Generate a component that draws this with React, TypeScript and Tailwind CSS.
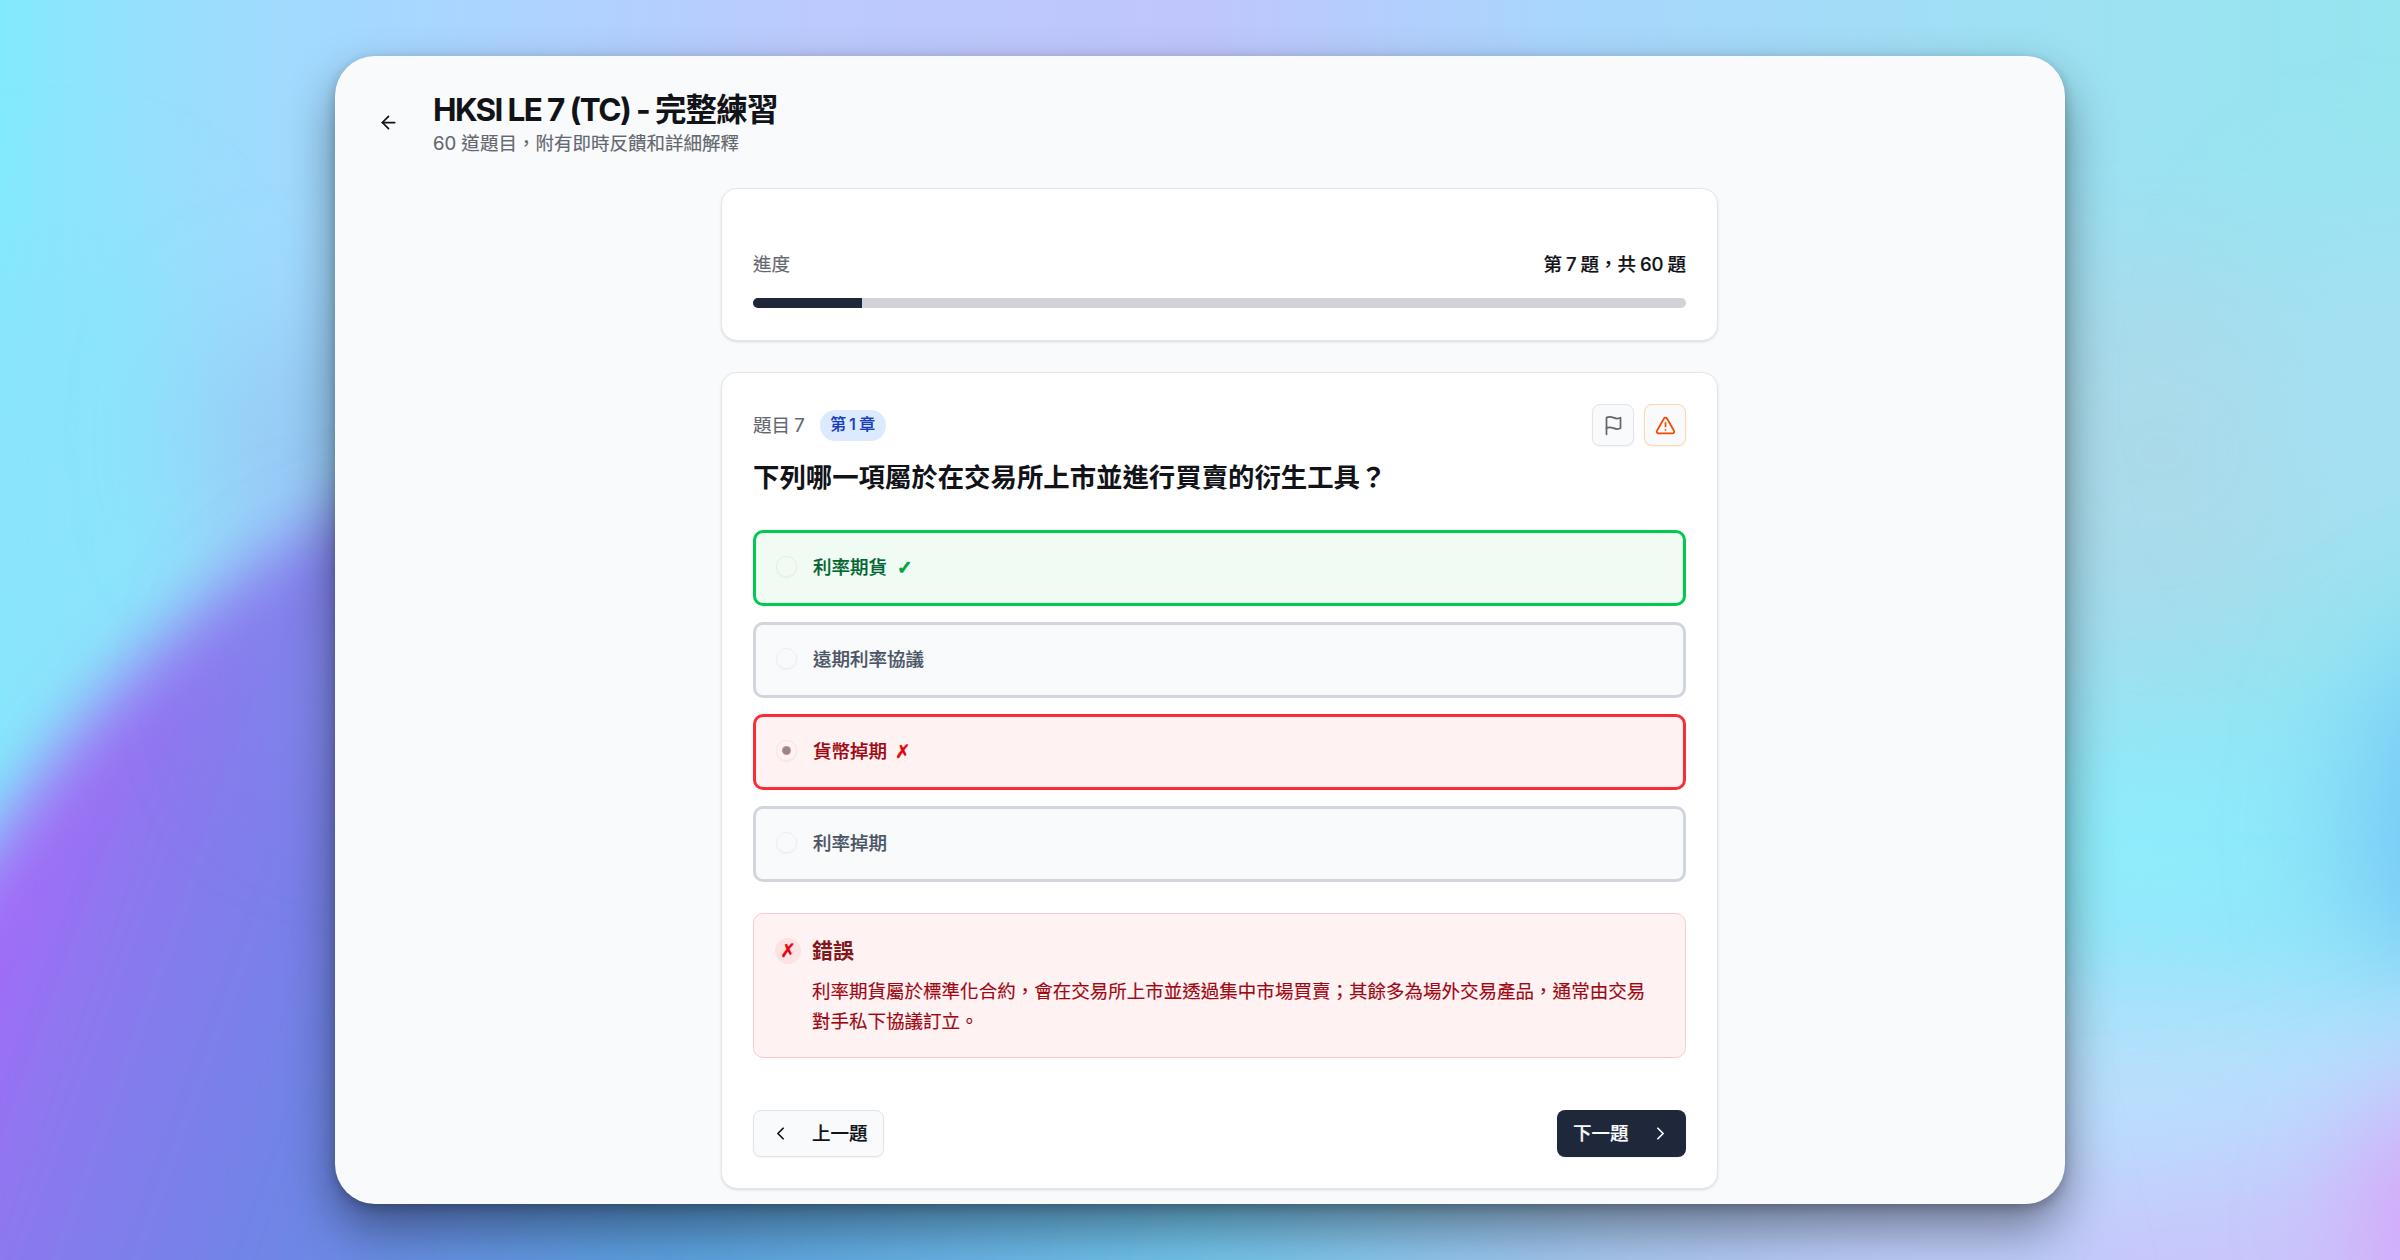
import React, { useState } from 'react';
import { AlertTriangle, ArrowLeft, ChevronLeft, ChevronRight } from 'lucide-react';
import { clsx } from 'clsx';

type OptionState = 'correct' | 'wrong' | 'neutral';

interface Option {
  id: string;
  label: string;
  state: OptionState;
}

const TOTAL = 60;
const CURRENT = 7;

const options: Option[] = [
  { id: 'a', label: '利率期貨', state: 'correct' },
  { id: 'b', label: '遠期利率協議', state: 'neutral' },
  { id: 'c', label: '貨幣掉期', state: 'wrong' },
  { id: 'd', label: '利率掉期', state: 'neutral' },
];

function Backdrop() {
  return (
    <svg className="absolute inset-0 h-full w-full" viewBox="0 0 2400 1260" preserveAspectRatio="none">
      <defs>
        <linearGradient id="sky" x1="0" x2="1" y1="0" y2="0">
          <stop offset="0" stopColor="#82eafd" />
          <stop offset="0.04" stopColor="#90e3fd" />
          <stop offset="0.09" stopColor="#9cdcfd" />
          <stop offset="0.16" stopColor="#a6d8ff" />
          <stop offset="0.34" stopColor="#bccafd" />
          <stop offset="0.5" stopColor="#bfc6fc" />
          <stop offset="0.65" stopColor="#a9d6fd" />
          <stop offset="0.83" stopColor="#9fe0f4" />
          <stop offset="1" stopColor="#96e5ef" />
        </linearGradient>
        <linearGradient id="violet" gradientUnits="userSpaceOnUse" x1="0" x2="2162" y1="0" y2="782">
          <stop offset="0.12" stopColor="#a868f9" />
          <stop offset="0.19" stopColor="#8a79ef" />
          <stop offset="0.29" stopColor="#7084e6" />
          <stop offset="0.45" stopColor="#5a9fde" />
          <stop offset="0.68" stopColor="#72c4ea" />
          <stop offset="0.85" stopColor="#a9c6ee" />
          <stop offset="0.96" stopColor="#bccbf8" />
        </linearGradient>
        <filter id="soft" x="-50%" y="-50%" width="200%" height="200%">
          <feGaussianBlur stdDeviation="32" />
        </filter>
        <filter id="softer" x="-150%" y="-150%" width="400%" height="400%">
          <feGaussianBlur stdDeviation="65" />
        </filter>
      </defs>
      <rect width="2400" height="1260" fill="url(#sky)" />
      <ellipse cx="60" cy="500" rx="130" ry="270" fill="#8ae4fb" filter="url(#softer)" />
      <ellipse cx="320" cy="440" rx="110" ry="110" fill="#94c8f4" filter="url(#softer)" />
      <ellipse cx="2160" cy="450" rx="200" ry="190" fill="#acdaea" opacity="0.9" filter="url(#softer)" />
      <ellipse cx="2400" cy="390" rx="130" ry="190" fill="#a5e0f3" filter="url(#softer)" />
      <path d="M1900 760 Q2250 780 2540 620 L2540 1100 L1900 1100 Z" fill="#8ce6f8" filter="url(#softer)" />
      <ellipse cx="2140" cy="850" rx="130" ry="60" fill="#90f0fc" filter="url(#softer)" />
      <ellipse cx="2480" cy="830" rx="110" ry="190" fill="#74c2f6" filter="url(#softer)" />
      <path d="M1900 980 L2240 990 L2560 1010 L2560 1400 L1900 1400 Z" fill="#b8e0fd" filter="url(#softer)" />
      <path d="M1900 1210 L2250 1170 L2560 1060 L2560 1500 L1900 1500 Z" fill="#c9c4fb" filter="url(#softer)" />
      <ellipse cx="2450" cy="1225" rx="70" ry="120" fill="#dc98f9" filter="url(#softer)" />
      <path
        d="M-200 1160 Q-80 930 30 790 Q160 610 400 480 L2000 900 L2110 1400 L-200 1500 Z"
        fill="url(#violet)"
        filter="url(#soft)"
      />
      <ellipse cx="360" cy="680" rx="110" ry="120" fill="#7f8ae8" opacity="0.7" filter="url(#softer)" />
    </svg>
  );
}

function FlagIcon({ className }: { className?: string }) {
  return (
    <svg
      className={className}
      viewBox="0 0 24 24"
      fill="none"
      stroke="currentColor"
      strokeWidth="2"
      strokeLinecap="round"
      strokeLinejoin="round"
    >
      <path d="M4 15s1-1 4-1 5 2 8 2 4-1 4-1V3s-1 1-4 1-5-2-8-2-4 1-4 1z" />
      <path d="M4 22v-7" />
    </svg>
  );
}

function OptionRow({ option, selected, onSelect }: { option: Option; selected: boolean; onSelect: () => void }) {
  return (
    <button
      type="button"
      onClick={onSelect}
      className={clsx(
        'flex h-[76px] w-full items-center rounded-[10px] border-3 pl-5 text-left text-[18.53px] font-medium [-webkit-text-stroke:0.2px]',
        option.state === 'correct' && 'border-[#00c950] bg-[#f0fbf4] text-[#016630]',
        option.state === 'wrong' && 'border-[#fb2c36] bg-[#fef2f2] text-[#9f0712]',
        option.state === 'neutral' && 'border-[#d1d5dc] bg-[#f9fafc] text-[#4a5565]'
      )}
    >
      <span className="mb-[3px] flex size-[21px] items-center justify-center rounded-full border border-black/5 shadow-xs">
        {selected && <span className="size-[7px] rounded-full bg-[#918792] ring-1 ring-[#d58a8f]" />}
      </span>
      <span className="ml-4">{option.label}</span>
      {option.state === 'correct' && (
        <span className="ml-[10px] font-['DejaVu_Sans',sans-serif] font-bold text-[#00a63e] [-webkit-text-stroke:1.2px]">
          ✓
        </span>
      )}
      {option.state === 'wrong' && (
        <span className="ml-[8px] font-['DejaVu_Sans',sans-serif] font-bold text-[#e7000b] [-webkit-text-stroke:0.4px]">
          ✗
        </span>
      )}
    </button>
  );
}

export default function App() {
  const [selected, setSelected] = useState('c');

  return (
    <div className="relative h-[1260px] w-[2400px] overflow-hidden pt-14 font-['Inter','Noto_Sans_CJK_TC',sans-serif] text-[#111318]">
      <Backdrop />
      <div className="relative mx-auto h-[1148px] w-[1730px] overflow-hidden rounded-[40px] bg-[#f8fafc] shadow-[0_24px_50px_rgba(0,0,0,0.42),0_4px_12px_rgba(0,0,0,0.22)]">
        <header className="flex h-[132px] items-center pl-[43px]">
          <ArrowLeft className="size-[21px]" />
          <div className="ml-[34px] pt-px">
            <h1 className="text-[31.5px] leading-[42px] font-bold tracking-[-0.025em]">
              <span className="tracking-[-0.052em]">HKSI LE 7 (TC) - </span>完整練習
            </h1>
            <p className="text-[18.53px] leading-[25px] text-[#65676e] [-webkit-text-stroke:0.15px]">
              60 道題目，附有即時反饋和詳細解釋
            </p>
          </div>
        </header>

        <main className="ml-[386px] flex w-[997px] flex-col gap-[31px]">
          {/* Progress */}
          <section className="h-[153px] rounded-2xl border border-[#e5e7ea] bg-white px-[31px] pt-[62px] shadow-sm">
            <div className="flex justify-between text-[18.53px] leading-[26px]">
              <span className="text-[#65676e] [-webkit-text-stroke:0.15px]">進度</span>
              <span className="font-medium [word-spacing:-1px] [-webkit-text-stroke:0.2px]">
                第 {CURRENT} 題，共 {TOTAL} 題
              </span>
            </div>
            <div className="mt-[21px] h-2.5 overflow-hidden rounded-full bg-[#d2d3d8]">
              <div className="h-full bg-[#1f273b]" style={{ width: `${(CURRENT / TOTAL) * 100}%` }} />
            </div>
          </section>

          {/* Question */}
          <section className="h-[817px] rounded-2xl border border-[#e5e7ea] bg-white px-[31px] pt-[31px] shadow-sm">
            <div className="flex items-center justify-between">
              <div className="flex items-center">
                <span className="pt-px text-[18.53px] text-[#65676e] [word-spacing:-1px] [-webkit-text-stroke:0.15px]">
                  題目 {CURRENT}
                </span>
                <span className="ml-[15px] flex h-[31px] items-center rounded-full bg-[#dbeafe] px-[10.5px] text-[15.88px] font-medium text-[#193cb8] [word-spacing:-1px] [-webkit-text-stroke:0.2px]">
                  第 1 章
                </span>
              </div>
              <div className="flex gap-[10px]">
                <button className="flex size-[42px] items-center justify-center rounded-lg border border-[#e2e4e8] bg-[#f8fafc] text-[#65676e] shadow-xs">
                  <FlagIcon className="size-[21px]" />
                </button>
                <button className="flex size-[42px] items-center justify-center rounded-lg border border-[#ffd6a7] bg-[#f8fafc] text-[#f54900] shadow-xs">
                  <AlertTriangle className="size-[21px]" />
                </button>
              </div>
            </div>

            <h2 className="mt-[10px] text-[26.4px] leading-[42px] font-semibold">
              下列哪一項屬於在交易所上市並進行買賣的衍生工具？
            </h2>

            <div className="mt-8 flex flex-col gap-4">
              {options.map((option) => (
                <OptionRow
                  key={option.id}
                  option={option}
                  selected={selected === option.id}
                  onSelect={() => setSelected(option.id)}
                />
              ))}
            </div>

            <div className="mt-[31px] flex h-[145px] rounded-[10px] border border-[#ffc9c9] bg-[#fef2f2] pt-[20px] pl-[21px]">
              <span className="mt-[4px] flex size-[26px] items-center justify-center rounded-full bg-[#ffe2e2] font-['DejaVu_Sans',sans-serif] text-[18.53px] font-bold text-[#e7000b] [-webkit-text-stroke:0.4px]">
                ✗
              </span>
              <div className="ml-[11px] w-[846px]">
                <h3 className="text-[21px] leading-[34px] font-semibold text-[#82181a]">錯誤</h3>
                <p className="mt-[8px] text-[18.53px] leading-[30px] text-[#9f0712] [-webkit-text-stroke:0.15px]">
                  利率期貨屬於標準化合約，會在交易所上市並透過集中市場買賣；其餘多為場外交易產品，通常由交易對手私下協議訂立。
                </p>
              </div>
            </div>

            <div className="mt-[52px] flex justify-between text-[18.53px] font-medium [-webkit-text-stroke:0.2px]">
              <button className="flex h-[47px] w-[131px] items-center rounded-lg border border-[#e2e4e8] bg-[#f8fafc] pl-[16px] shadow-xs">
                <ChevronLeft className="size-[21px]" />
                <span className="ml-[21px]">上一題</span>
              </button>
              <button className="flex h-[47px] w-[129px] items-center rounded-lg bg-[#1f273b] pl-[16px] text-[#f8fafc] shadow-xs">
                下一題
                <ChevronRight className="ml-[21px] size-[21px]" />
              </button>
            </div>
          </section>
        </main>
      </div>
    </div>
  );
}
